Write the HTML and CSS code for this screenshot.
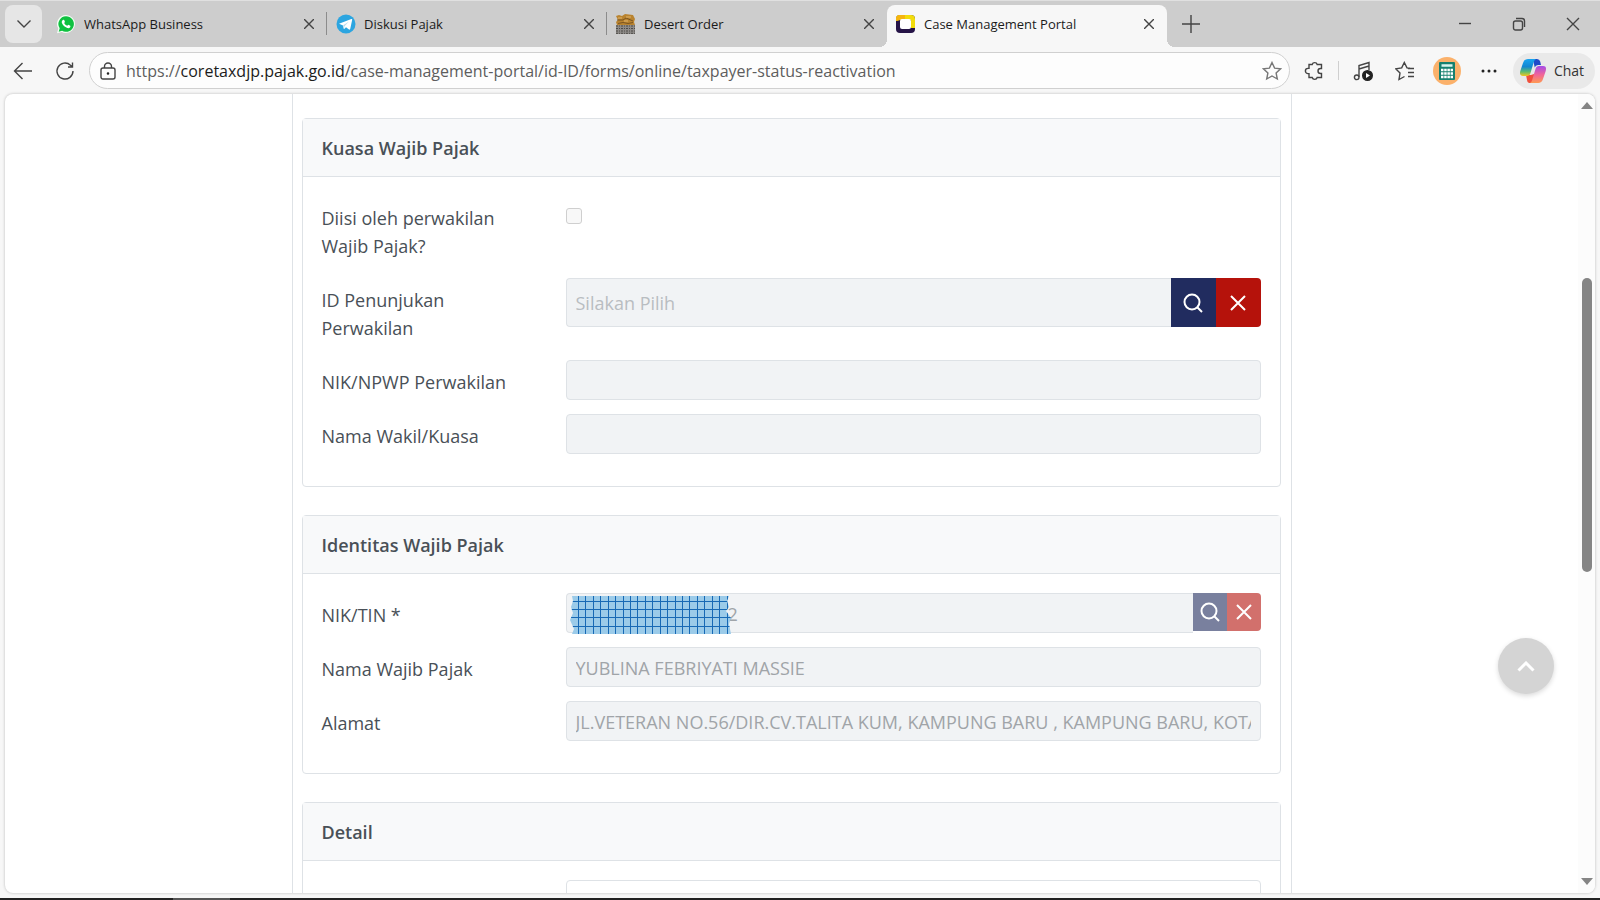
FILE: index.html
```
<!DOCTYPE html>
<html lang="id">
  <head>
    <meta charset="UTF-8" />
    <meta name="viewport" content="width=device-width, initial-scale=1.0" />
    <title>Case Management Portal</title>
    <link rel="stylesheet" href="styles.css">
  </head>

  <body>
    <header class="tabstrip">
      <button class="tab-menu" type="button" aria-label="Tab">
        <svg width="16" height="10" viewBox="0 0 16 10"><path d="M1.500 1.500 8 8l6.500-6.500" /></svg>
      </button>
      <div class="tab">
        <svg class="favicon" viewBox="0 0 20 20">
          <path d="M10 1a9 9 0 0 1 0 18c-1.600 0-3-.4-4.300-1.100L1 19.200l1.300-4.600A9 9 0 0 1 10 1z" fill="#f4fff5" />
          <path d="M10 2.200a7.800 7.800 0 1 1-3.900 14.500l-3.400 1 1-3.400A7.800 7.800 0 0 1 10 2.200z" fill="#0fc140" />
          <path d="M7.300 5.800c.4-.2.8 0 1 .4l.6 1.500c.1.400-.6 1-.7 1.300.6 1.300 1.700 2.300 3 2.800.4 0 .9-1.100 1.300-1l1.700.9c.4.200.2 1.200-.2 1.700-.6.700-1.800.9-2.700.6-2.600-.8-4.600-2.700-5.400-4.900-.5-1.300.3-2.900 1.400-3.300z" fill="#fff" />
        </svg>
        <span class="tab-title">WhatsApp Business</span>
        <button class="tab-close" type="button" aria-label="Tutup"><svg width="10" height="10" viewBox="0 0 10 10"><path d="M0 0l10 10M10 0 0 10" /></svg></button>
      </div>
      <div class="tab">
        <svg class="favicon" viewBox="0 0 20 20">
          <circle cx="10" cy="10" r="9.500" fill="#2ca5e0" />
          <path d="M3 9.800 15.300 5c.6-.2 1 .1.900.8l-2 9.200c-.2.700-.6.800-1.200.5l-3-2.200-1.500 1.500c-.4.300-.7.200-.8-.4l-.7-3z" fill="#fff" />
          <path d="M7.200 11.300 13 7.500l-4.500 4.700-.5 2.300z" fill="#b9dcef" />
        </svg>
        <span class="tab-title">Diskusi Pajak</span>
        <button class="tab-close" type="button" aria-label="Tutup"><svg width="10" height="10" viewBox="0 0 10 10"><path d="M0 0l10 10M10 0 0 10" /></svg></button>
      </div>
      <div class="tab last">
        <svg class="favicon" viewBox="0 0 20 20">
          <path d="M0 11h19v9H0z" fill="#8d8a87" />
          <path d="M0 12h19M0 14.500h19M0 17h19M0 19.300h19" stroke="#4d4a47" stroke-dasharray="2 1 1 1" />
          <path d="M0 2l3-1 3 1 3-2 8 1 2 4-1 3 1 3H1l-1-3 2-2z" fill="#b9832f" />
          <path d="M1 6h6l3-2 7 3M2 9.500l5-1 5 1 5-1" stroke="#7a5420" fill="none" />
          <path d="M2 4h4M10 3h5M8 7h4" stroke="#e0b46c" />
        </svg>
        <span class="tab-title">Desert Order</span>
        <button class="tab-close" type="button" aria-label="Tutup"><svg width="10" height="10" viewBox="0 0 10 10"><path d="M0 0l10 10M10 0 0 10" /></svg></button>
      </div>
      <div class="tab active">
        <svg class="favicon" viewBox="0 0 20 20">
          <rect x="0" y="1" width="19" height="18" rx="4" fill="#261447" />
          <path d="M0 7V5q0-4 4-4h11q4 0 4 4v9h-4V6H4z" fill="#f2dc0c" />
          <path d="M0 7V5q0-4 4-4h5v4L4 6z" fill="#f6b510" />
          <rect x="4" y="5" width="11" height="10" rx="2" fill="#fff" />
        </svg>
        <span class="tab-title">Case Management Portal</span>
        <button class="tab-close" type="button" aria-label="Tutup"><svg width="10" height="10" viewBox="0 0 10 10"><path d="M0 0l10 10M10 0 0 10" /></svg></button>
      </div>
      <button class="new-tab" type="button" aria-label="Tab baru"><svg width="18" height="18" viewBox="0 0 18 18"><path d="M9 0v18M0 9h18" /></svg></button>
      <div class="window-controls">
        <button type="button" aria-label="Minimalkan"><svg width="14" height="14" viewBox="0 0 14 14"><path d="M1 6.500h12" /></svg></button>
        <button type="button" aria-label="Pulihkan"><svg width="14" height="14" viewBox="0 0 14 14"><rect x="1.500" y="4" width="9" height="9" rx="2" /><path d="M4 1.500h6q2.500 0 2.500 2.500v6" /></svg></button>
        <button type="button" aria-label="Tutup"><svg width="14" height="14" viewBox="0 0 14 14"><path d="M1 1l12 12M13 1 1 13" /></svg></button>
      </div>
    </header>

    <nav class="toolbar">
      <button class="nav-btn" type="button" aria-label="Kembali">
        <svg width="20" height="18" viewBox="0 0 20 18"><path d="M19 9H1.500M9.500 1l-8 8 8 8" /></svg>
      </button>
      <button class="nav-btn" type="button" aria-label="Muat ulang">
        <svg width="20" height="20" viewBox="0 0 20 20"><path d="M18 10a8 8 0 1 1-2.500-5.800L17.500 6M17.500 1.500V6H13" /></svg>
      </button>
      <div class="address">
        <svg class="lock" width="16" height="18" viewBox="0 0 16 18"><rect x="1" y="6" width="14" height="11" rx="2" /><path d="M4.500 6V4.500a3.500 3.500 0 0 1 7 0V6" /><circle cx="8" cy="11.500" r=".6" class="solid" /></svg>
        <a class="url" href="#">https://<b>coretaxdjp.pajak.go.id</b>/case-management-portal/id-ID/forms/online/taxpayer-status-reactivation</a>
        <svg class="star" width="20" height="20" viewBox="0 0 20 20"><path d="M10 1.500l2.600 5.600 6 .7-4.500 4.200 1.200 6L10 15l-5.300 3 1.200-6L1.400 7.800l6-.7z" /></svg>
      </div>
      <div class="tools">
        <button type="button" aria-label="Ekstensi">
          <svg width="20" height="20" viewBox="0 0 20 20"><path d="M5 3.500h3.200a2.600 2.600 0 0 1 5 0H17.500V7.500h-1a2.500 2.500 0 0 0 0 5h1v4H13.200a2.600 2.600 0 0 1-5 0H5V12.600H4a2.600 2.600 0 0 1 0-5.200h1z" /></svg>
        </button>
        <span class="divider"></span>
        <button type="button" aria-label="Media">
          <svg width="20" height="20" viewBox="0 0 20 20"><path d="M6 16V4.500L16 1.500V9M6 8l10-3" /><circle cx="3.700" cy="16.300" r="2.300" /><circle cx="14.500" cy="14.500" r="4.800" class="solid" /><path d="M13 12v5l4-2.500z" class="white" /></svg>
        </button>
        <button type="button" aria-label="Favorit">
          <svg width="20" height="20" viewBox="0 0 20 20"><path d="M15 7.300l-3-.4-2.700-5.400-2.600 5.400-6 .9L5 12l-1 6.500L9.500 15.500M13 7.500H19M13 11.500H19M13 15.500H19" /></svg>
        </button>
        <button type="button" aria-label="Profil">
          <svg width="28" height="28" viewBox="0 0 28 28"><circle cx="14" cy="14" r="14" fill="#fbb16b" stroke="none" /><rect x="6" y="5" width="16" height="18" rx="1" fill="#16806f" stroke="none" /><path d="M8.500 8.500h11" stroke="#d8f5ee" stroke-width="2.500" /><path d="M8 13h12M8 16.500h12M8 20h12" stroke="#fff" stroke-width="2.500" stroke-dasharray="2.500 .7" /></svg>
        </button>
        <button type="button" aria-label="Lainnya">
          <svg width="20" height="20" viewBox="0 0 20 20"><g class="solid"><circle cx="4" cy="10" r=".8" /><circle cx="10" cy="10" r=".8" /><circle cx="16" cy="10" r=".8" /></g></svg>
        </button>
      </div>
      <button class="chat" type="button">
        <svg width="26" height="24" viewBox="0 0 26 24">
          <defs>
            <linearGradient id="blue" x1="0" y1="0" x2="0" y2="1"><stop offset="0" stop-color="#18a4f0" /><stop offset=".45" stop-color="#1186d2" /><stop offset=".75" stop-color="#5ebd6e" /><stop offset="1" stop-color="#f4c61d" /></linearGradient>
            <linearGradient id="pink" x1="0" y1="0" x2="0" y2="1"><stop offset="0" stop-color="#a44be8" /><stop offset=".5" stop-color="#f0649a" /><stop offset="1" stop-color="#ff9a52" /></linearGradient>
          </defs>
          <path d="M13 0h4q2.500 0 3.200 2.500L21 6h-3q-2.500 0-3.300 2.500z" fill="#2049c8" />
          <path d="M8 24h4q2 0 2.800-2.500L17 14l-6 2H6l1 5q.3 3 2 3z" fill="#f0503c" />
          <path d="M8 0h8q-1.500.5-2.200 3L10.500 14q-.8 3-3.500 3H3q-4 0-2.700-5L3 4q1.200-4 5-4z" fill="url(#blue)" />
          <path d="M18 24h-8q1.500-.5 2.200-3l3.300-11q.8-3 3.500-3h4q4 0 2.700 5L23 20q-1.200 4-5 4z" fill="url(#pink)" />
        </svg>
        Chat
      </button>
    </nav>

    <div class="viewport">
      <main class="page">
        <form class="container">
          <section class="card">
            <h2 class="card-header">Kuasa Wajib Pajak</h2>
            <div class="card-body">
              <div class="row">
                <label for="filled-by-rep">Diisi oleh perwakilan Wajib Pajak?</label>
                <input id="filled-by-rep" class="check" type="checkbox" disabled>
              </div>
              <div class="row">
                <label for="rep-id">ID Penunjukan Perwakilan</label>
                <div class="input-group large">
                  <input id="rep-id" class="control" type="text" placeholder="Silakan Pilih" disabled>
                  <button class="btn-search" type="button" aria-label="Cari"><svg width="20" height="20" viewBox="0 0 20 20"><circle cx="9" cy="9" r="7.500" /><path d="M14.500 14.500 19 19" /></svg></button>
                  <button class="btn-clear" type="button" aria-label="Hapus"><svg width="20" height="20" viewBox="0 0 20 20"><path d="M3 3l14 14M17 3 3 17" /></svg></button>
                </div>
              </div>
              <div class="row">
                <label for="rep-nik">NIK/NPWP Perwakilan</label>
                <input id="rep-nik" class="control" type="text" disabled>
              </div>
              <div class="row">
                <label for="rep-name">Nama Wakil/Kuasa</label>
                <input id="rep-name" class="control" type="text" disabled>
              </div>
            </div>
          </section>

          <section class="card">
            <h2 class="card-header">Identitas Wajib Pajak</h2>
            <div class="card-body">
              <div class="row">
                <label for="nik">NIK/TIN *</label>
                <div class="input-group">
                  <input id="nik" class="control masked" type="text" value="2" disabled>
                  <button class="btn-search" type="button" aria-label="Cari" disabled><svg width="20" height="20" viewBox="0 0 20 20"><circle cx="9" cy="9" r="7.500" /><path d="M14.500 14.500 19 19" /></svg></button>
                  <button class="btn-clear" type="button" aria-label="Hapus" disabled><svg width="20" height="20" viewBox="0 0 20 20"><path d="M3 3l14 14M17 3 3 17" /></svg></button>
                  <svg class="mask" width="163" height="40" viewBox="0 0 163 40">
                    <defs>
                      <clipPath id="torn"><path d="M3 1H160L158 6 160 12 157 16 162 23 160 29 162 39H3L5 34 1 25 4 18 2 12 4 6z" /></clipPath>
                    </defs>
                    <g clip-path="url(#torn)">
                      <rect width="163" height="40" fill="#9bcbe9" />
                      <path class="mask-line" d="M9.500 0v40M16.500 0v40M24.500 0v40M31.500 0v40M39.500 0v40M46.500 0v40M54.500 0v40M61.500 0v40M68.500 0v40M76.500 0v40M83.500 0v40M91.500 0v40M98.500 0v40M106.500 0v40M113.500 0v40M120.500 0v40M128.500 0v40M135.500 0v40M143.500 0v40M150.500 0v40M158.500 0v40M0 6.500h163M0 14.500h163M0 22.500h163M0 31.500h163" />
                    </g>
                  </svg>
                </div>
              </div>
              <div class="row">
                <label for="name">Nama Wajib Pajak</label>
                <input id="name" class="control" type="text" value="YUBLINA FEBRIYATI MASSIE" disabled>
              </div>
              <div class="row">
                <label for="address">Alamat</label>
                <input id="address" class="control" type="text" value="JL.VETERAN NO.56/DIR.CV.TALITA KUM, KAMPUNG BARU , KAMPUNG BARU, KOTA" disabled>
              </div>
            </div>
          </section>

          <section class="card">
            <h2 class="card-header">Detail</h2>
            <div class="card-body">
              <div class="row">
                <span></span>
                <input class="control" type="text" aria-label="Detail">
              </div>
            </div>
          </section>
        </form>
      </main>
      <div class="scrollbar">
        <svg width="12" height="7" viewBox="0 0 12 7"><path d="M6 0l6 7H0z" /></svg>
        <div class="track"><div class="thumb"></div></div>
        <svg width="12" height="7" viewBox="0 0 12 7"><path d="M6 7 0 0h12z" /></svg>
      </div>
      <button class="to-top" type="button" aria-label="Ke atas"><svg width="18" height="11" viewBox="0 0 18 11"><path d="M1.500 9.500 9 2l7.500 7.500" /></svg></button>
    </div>
    <footer class="taskbar"><span></span></footer>
  </body>
</html>
```
FILE: styles.css
```
* {
  box-sizing: border-box;
}

body {
  display: flex;
  flex-direction: column;
  height: 100vh;
  margin: 0;
  overflow: hidden;
  font-family: 'Open Sans', 'Noto Sans', sans-serif;
  color: #495057;
  background: #f7f7f7;
}

button {
  display: flex;
  flex: none;
  align-items: center;
  justify-content: center;
  padding: 0;
  border: 0;
  font: inherit;
  color: inherit;
  background: none;
}

svg {
  flex: none;
  fill: none;
  stroke: #444;
  stroke-width: 1.4;
}

svg .solid {
  fill: #222;
  stroke: #222;
}

svg .white {
  fill: #fff;
  stroke: none;
}

/* tabs */
.tabstrip {
  display: flex;
  flex: none;
  height: 47px;
  padding: 4px 0 0 5px;
  border-top: 1px solid #e0e0e0;
  background: #cdcdcd;
}

.tab-menu {
  width: 37px;
  height: 38px;
  margin-right: 5px;
  border-radius: 8px;
  background: #e6e6e6;
}

.tab {
  position: relative;
  display: flex;
  flex: 0 1 280px;
  align-items: center;
  height: 38px;
  padding: 0 11px 0 9px;
  font-size: 13px;
  color: #1b1b1b;
}

.tab:not(.active):not(.last)::after {
  content: '';
  position: absolute;
  right: 0;
  top: 7px;
  width: 1px;
  height: 23px;
  background: #8c8c8c;
}

.tab.active {
  height: 42px;
  padding-bottom: 4px;
  border-radius: 8px 8px 0 0;
  background: #f7f7f7;
}

.tab.active::before,
.tab.active::after {
  content: '';
  position: absolute;
  bottom: 0;
  width: 8px;
  height: 8px;
}

.tab.active::before {
  left: -8px;
  background: radial-gradient(circle at 0 0, #cdcdcd 8px, #f7f7f7 8px);
}

.tab.active::after {
  right: -8px;
  background: radial-gradient(circle at 100% 0, #cdcdcd 8px, #f7f7f7 8px);
}

.favicon {
  width: 20px;
  height: 20px;
  margin-right: 8px;
  stroke-width: 1;
}

.favicon [fill]:not([stroke]) {
  stroke: none;
}

.tab-title {
  flex: 1;
  overflow: hidden;
  white-space: nowrap;
}

.tab-close {
  width: 14px;
  height: 20px;
}

.new-tab {
  width: 48px;
  height: 38px;
}

.window-controls {
  display: flex;
  height: 38px;
  margin-left: auto;
}

.window-controls button {
  width: 54px;
}

/* address bar */
.toolbar {
  display: flex;
  flex: none;
  align-items: center;
  height: 47px;
  padding: 0 5px 0 2px;
}

.nav-btn {
  width: 42px;
  height: 36px;
}

.address {
  display: flex;
  flex: 1;
  align-items: center;
  min-width: 0;
  height: 37px;
  margin-left: 3px;
  padding: 0 7px 0 10px;
  border: 1px solid #d0d0d0;
  border-radius: 19px;
  background: #fdfdfd;
}

.url {
  flex: 1;
  margin-left: 10px;
  overflow: hidden;
  font-size: 16px;
  white-space: nowrap;
  text-decoration: none;
  color: #5d5d5d;
}

.url b {
  font-weight: 400;
  color: #1b1b1b;
}

.star {
  stroke: #777;
}

.tools {
  display: flex;
  align-items: center;
}

.tools button {
  width: 42px;
}

.tools button:first-child {
  width: 48px;
}

.divider {
  width: 1px;
  height: 19px;
  margin-right: 3px;
  background: #cfcfcf;
}

.chat {
  gap: 8px;
  width: 82px;
  height: 36px;
  margin-left: 3px;
  padding-right: 4px;
  border-radius: 18px;
  font-size: 14px;
  color: #333;
  background: #e9e9e9;
}

.chat path {
  stroke: none;
}

/* page */
.viewport {
  position: relative;
  display: flex;
  flex: 1;
  min-height: 0;
  margin: 0 5px 5px;
  overflow: hidden;
  border-radius: 8px;
  background: #fff;
  box-shadow: 0 0 3px rgba(0, 0, 0, 0.25);
}

.page {
  flex: 1;
  overflow: hidden;
}

.container {
  display: flex;
  flex-direction: column;
  gap: 28px;
  max-width: 1000px;
  margin: 0 auto;
  padding: 24px 10px 24px 9px;
  border: solid #dee2e6;
  border-width: 0 1px;
}

.card {
  border: 1px solid #dee2e6;
  border-radius: 4px;
}

.card-header {
  height: 58px;
  margin: 0;
  padding: 0 19px;
  border-bottom: 1px solid #dee2e6;
  font-size: 18px;
  font-weight: 600;
  line-height: 58px;
  background: #f8f9fa;
}

.card-body {
  display: flex;
  flex-direction: column;
  gap: 14px;
  padding: 19px 19px 32px;
}

.row {
  display: grid;
  grid-template-columns: 200px 1fr;
  column-gap: 44px;
  align-items: start;
  font-size: 18px;
  line-height: 28px;
}

.row label {
  padding: 8px 0 4px;
}

.check {
  width: 16px;
  height: 16px;
  margin: 12px 0 0;
  border: 1px solid #cfcfcf;
  border-radius: 3px;
  background: #f8f8f8;
  appearance: none;
}

.control {
  width: 100%;
  min-width: 0;
  height: 40px;
  padding: 2px 9px 0;
  border: 1px solid #dee2e6;
  border-radius: 4px;
  font: inherit;
  color: #495057;
  background: #fff;
}

.control:disabled {
  color: #a0a4a8;
  background: #f1f3f5;
}

.control::placeholder {
  color: #b9bdc1;
}

.input-group {
  position: relative;
  display: flex;
  align-items: flex-start;
}

.input-group .control {
  flex: 1;
  border-right: 0;
  border-radius: 4px 0 0 4px;
}

.input-group button {
  width: 34px;
  height: 38px;
}

.input-group button:disabled {
  opacity: 0.6;
}

.input-group.large .control {
  height: 49px;
  padding-top: 0;
}

.input-group.large button {
  width: 45px;
  height: 49px;
}

.input-group button svg {
  stroke: #fff;
  stroke-width: 2;
}

.btn-search {
  background: #212c5f;
}

.btn-clear {
  border-radius: 0 4px 4px 0;
  background: #b5120b;
}

.control.masked {
  padding-left: 161px;
}

.mask {
  position: absolute;
  left: 3px;
  top: 2px;
}

.mask rect {
  stroke: none;
}

.mask-line {
  stroke: #1769b5;
  stroke-width: 1;
}

.scrollbar {
  display: flex;
  flex: none;
  flex-direction: column;
  align-items: center;
  justify-content: space-between;
  width: 17px;
  padding: 8px 0;
  background: #fcfcfc;
}

.scrollbar path {
  fill: #858585;
  stroke: none;
}

.track {
  flex: 1;
  padding-top: 169px;
}

.thumb {
  width: 10px;
  height: 49%;
  border-radius: 5px;
  background: #858585;
}

.to-top {
  position: absolute;
  right: 41px;
  bottom: 199px;
  width: 56px;
  height: 56px;
  border-radius: 50%;
  background: #d4d4d4;
  box-shadow: 0 2px 5px rgba(0, 0, 0, 0.15);
}

.to-top svg {
  stroke: #fff;
  stroke-width: 3;
}

.taskbar {
  flex: none;
  height: 2px;
  background: #222;
}

.taskbar span {
  display: block;
  width: 57px;
  height: 2px;
  margin-left: 173px;
  background: #555;
}
```
